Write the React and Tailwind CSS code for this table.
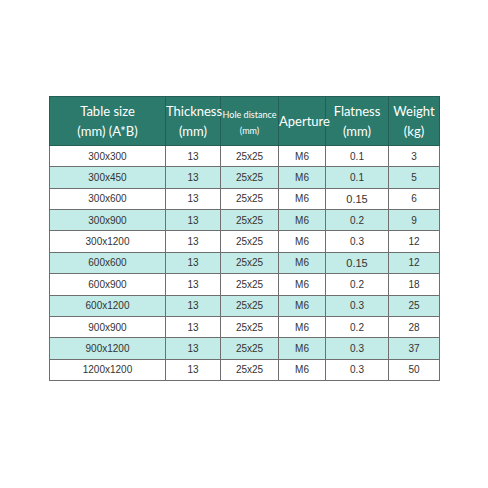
import React from 'react';

const rows = [
  ['300x300', '13', '25x25', 'M6', '0.1', '3'],
  ['300x450', '13', '25x25', 'M6', '0.1', '5'],
  ['300x600', '13', '25x25', 'M6', '0.15', '6'],
  ['300x900', '13', '25x25', 'M6', '0.2', '9'],
  ['300x1200', '13', '25x25', 'M6', '0.3', '12'],
  ['600x600', '13', '25x25', 'M6', '0.15', '12'],
  ['600x900', '13', '25x25', 'M6', '0.2', '18'],
  ['600x1200', '13', '25x25', 'M6', '0.3', '25'],
  ['900x900', '13', '25x25', 'M6', '0.2', '28'],
  ['900x1200', '13', '25x25', 'M6', '0.3', '37'],
  ['1200x1200', '13', '25x25', 'M6', '0.3', '50'],
];

export default function App() {
  return (
    <div className="w-[488px] h-[488px] bg-white pt-[96px] pl-[49px]">
      <table className="border-collapse table-fixed w-[390px]">
        <colgroup>
          <col className="w-[116px]" />
          <col className="w-[55px]" />
          <col className="w-[58px]" />
          <col className="w-[47px]" />
          <col className="w-[63px]" />
          <col className="w-[51px]" />
        </colgroup>
        <thead>
          <tr className="h-[49px] bg-[#2b7a6c] text-white font-['Lato',sans-serif] text-[13px] leading-[20px]">
            <th className="font-normal border border-[#235f55] p-0">Table size<br />(mm) (A*B)</th>
            <th className="font-normal border border-[#235f55] p-0 whitespace-nowrap">Thickness<br />(mm)</th>
            <th className="font-normal border border-[#235f55] p-0 pt-[4px] text-[9px] leading-[16px] whitespace-nowrap">Hole distance<br />(mm)</th>
            <th className="font-normal border border-[#235f55] p-0 whitespace-nowrap">Aperture</th>
            <th className="font-normal border border-[#235f55] p-0">Flatness<br />(mm)</th>
            <th className="font-normal border border-[#235f55] p-0">Weight<br />(kg)</th>
          </tr>
        </thead>
        <tbody className="font-['Liberation_Sans',sans-serif] text-[10px] text-[#333]">
          {rows.map((r, i) => (
            <tr key={i} className={`h-[21.36px] ${i % 2 ? 'bg-[#c3ebe7]' : 'bg-white'}`}>
              {r.map((c, j) => (
                <td key={j} className={`border border-[#6f6f6f] p-0 text-center ${c === '0.15' ? 'text-[11px]' : ''}`}>{c}</td>
              ))}
            </tr>
          ))}
        </tbody>
      </table>
    </div>
  );
}
